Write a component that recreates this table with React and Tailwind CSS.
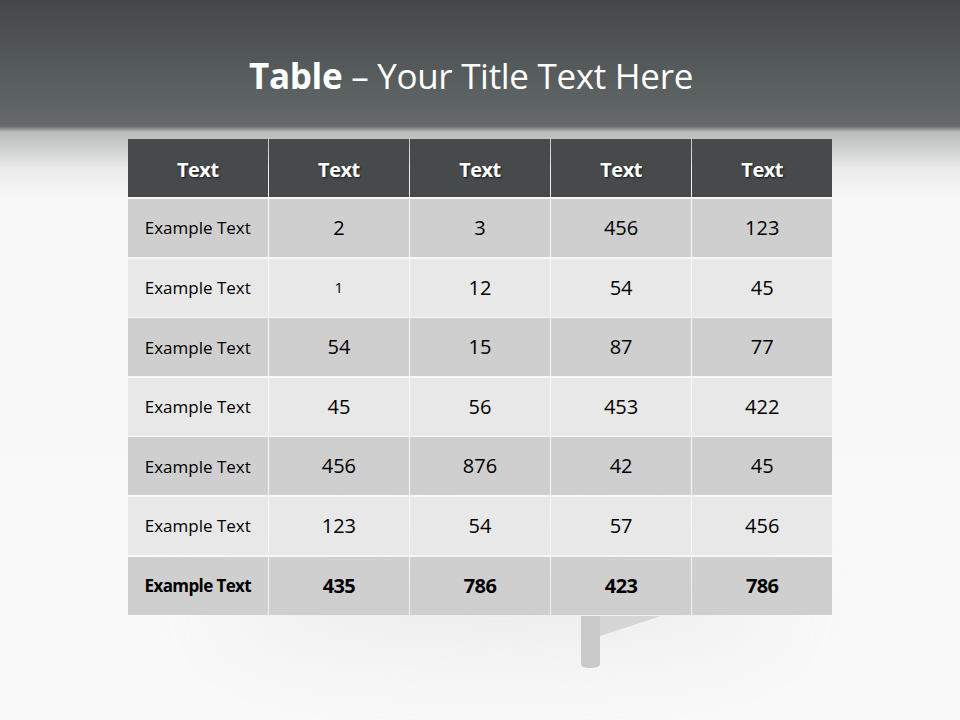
import React from 'react';

const rows = [
    ['Example Text', '2', '3', '456', '123'],
    ['Example Text', '1', '12', '54', '45'],
    ['Example Text', '54', '15', '87', '77'],
    ['Example Text', '45', '56', '453', '422'],
    ['Example Text', '456', '876', '42', '45'],
    ['Example Text', '123', '54', '57', '456'],
    ['Example Text', '435', '786', '423', '786'],
];

const font = { fontFamily: '"Open Sans", "Noto Sans", sans-serif' };

const App = () => {
    return (
        <div
            className="relative w-[960px] h-[720px] overflow-hidden bg-[linear-gradient(to_bottom,#444849_0px,#5d6262_100px,#666a6a_126px,#b9bbbb_132px,#ececec_170px,#f8f8f8_200px,#f9f9f9_720px)]"
            style={font}
        >
            {/* soft floor shadow under the table */}
            <div className="absolute left-[220px] top-[560px] w-[560px] h-[100px] rounded-[50%] bg-[#e9e9e9] blur-2xl opacity-70" />

            {/* table leg */}
            <svg className="absolute left-[576px] top-[612px]" width="110" height="60" viewBox="0 0 110 60">
                <path d="M24 4 L85 4 L24 24 Z" fill="#d6d6d6" />
                <path d="M5 4 L24 4 L24 52 Q24 56 14 56 Q5 56 5 52 Z" fill="#cacaca" />
            </svg>

            <h1 className="pt-[53px] pr-[18px] text-center text-white text-[35px] leading-[46px] tracking-[-0.3px]">
                <span className="font-bold">Table</span> – Your Title Text Here
            </h1>

            <div className="relative ml-[128px] mt-[40px] w-[704px] flex flex-col gap-y-[1.6px]">
                <div className="grid grid-cols-5 gap-x-[1.5px] h-[58px] mb-[0.5px]">
                    {[0, 1, 2, 3, 4].map((i) => (
                        <div
                            key={i}
                            className="bg-[#464a4b] flex items-center justify-center pt-[3px] text-white font-bold text-[20px] tracking-[-0.5px] [text-shadow:1px_1px_2px_rgba(0,0,0,0.7)]"
                        >
                            Text
                        </div>
                    ))}
                </div>
                {rows.map((row, r) => {
                    const bg = r % 2 === 0 ? 'bg-[#cfcfcf]' : 'bg-[#e8e8e8]';
                    const last = r === rows.length - 1;
                    return (
                        <div key={r} className="grid grid-cols-5 gap-x-[1.5px] h-[58px]">
                            {row.map((cell, c) => (
                                <div
                                    key={c}
                                    className={`${bg} flex items-center justify-center text-black ${c === 0 ? 'text-[17px]' : r === 1 && c === 1 ? 'text-[15px]' : 'text-[20px]'} ${last ? 'font-bold tracking-[-0.6px]' : ''}`}
                                >
                                    {cell}
                                </div>
                            ))}
                        </div>
                    );
                })}
            </div>
        </div>
    );
};

export default App;
